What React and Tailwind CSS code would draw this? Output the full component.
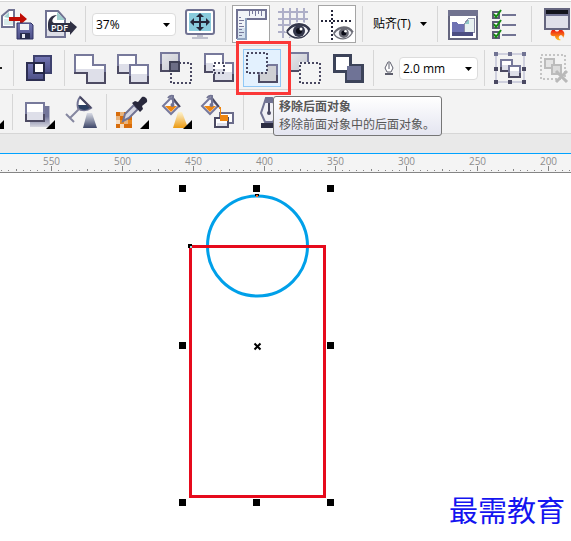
// src/App.jsx
import React, { useState } from "react";

const LIGHT = "#717393";
const DARK = "#4a4962";

// null is a cell whose number lies outside of the window
const RULER_MARKS = [null, 550, 500, 450, 400, 350, 300, 250, 200, null];
const MINOR_TICKS = [0, 7, 14, 21, 28, 42, 49, 56, 63];

// Shared gradients, every icon refers to these by id
function IconDefs() {
  return (
    <svg width="0" height="0" className="absolute" aria-hidden="true">
      <defs>
        <linearGradient id="edge" x1="0" y1="0" x2="0" y2="1">
          <stop offset="0.6" stopColor="#77799b" />
          <stop offset="0.6" stopColor="#4d4b63" />
        </linearGradient>
        <linearGradient id="face" x1="0" y1="0" x2="0" y2="1">
          <stop offset="0.5" stopColor="#ffffff" />
          <stop offset="0.5" stopColor="#dedfe9" />
        </linearGradient>
        <linearGradient id="grayFace" x1="0" y1="0" x2="1" y2="1">
          <stop offset="0" stopColor="#e6e7ea" />
          <stop offset="1" stopColor="#c6c8d0" />
        </linearGradient>
        <linearGradient id="navy" x1="0" y1="0" x2="0" y2="1">
          <stop offset="0" stopColor="#7477b5" />
          <stop offset="1" stopColor="#4c4f86" />
        </linearGradient>
        <linearGradient id="mist" x1="0" y1="0" x2="0" y2="1">
          <stop offset="0" stopColor="#d9dce6" />
          <stop offset="1" stopColor="#3d4668" />
        </linearGradient>
        <linearGradient id="gold" x1="0" y1="0" x2="0" y2="1">
          <stop offset="0" stopColor="#fdf3cf" />
          <stop offset="1" stopColor="#eb9a12" />
        </linearGradient>
        <linearGradient id="shade" x1="0" y1="0" x2="0" y2="1">
          <stop offset="0.5" stopColor="#73769a" />
          <stop offset="1" stopColor="#d5d6df" />
        </linearGradient>
        <linearGradient id="fire" x1="0" y1="0" x2="0" y2="1">
          <stop offset="0" stopColor="#ee1c10" />
          <stop offset="1" stopColor="#ffc41a" />
        </linearGradient>
      </defs>
    </svg>
  );
}

function Icon({ children, crisp }) {
  return (
    <svg
      viewBox="0 0 38 38"
      width="38"
      height="38"
      fill="none"
      shapeRendering={crisp ? "crispEdges" : "auto"}
      aria-hidden="true"
    >
      {children}
    </svg>
  );
}

// Little corner mark for buttons that open a flyout
const Flyout = () => <path d="M36 27v9h-9z" fill="#000" />;

const Dotted = ({ x, y, w, h, color = "#4a4962" }) => (
  <rect x={x} y={y} width={w} height={h} stroke={color} strokeWidth="2" strokeDasharray="2 2" />
);

const Bucket = () => (
  <>
    <path d="M11 5l8 8-8 8-8-8z" fill="#f6f6fa" stroke="#77799b" strokeWidth="2" />
    <path d="M5 13h12l-6 6z" fill="#ee8610" />
    <path d="M13 5l7 9" stroke={DARK} strokeWidth="2" />
    <path d="M8 5q2-3 5-2v9" stroke={LIGHT} strokeWidth="2" />
    <circle cx="12.500" cy="12" r="2" fill={LIGHT} />
  </>
);

const ImportIcon = () => (
  <Icon>
    <path d="M4 22V11l7-6h5v17z" fill="#fff" stroke={LIGHT} strokeWidth="2" />
    <path d="M6 12l5-5v6z" fill="#a6d3d2" />
    <path d="M6 14h9v6H6z" fill="#d8ebea" />
    <path d="M11 12h11V8l7 6-7 6v-4H11z" fill="#c00d05" />
    <path d="M19 18h14l2 2v14H19z" fill="url(#navy)" stroke="#2e3163" strokeWidth="1" />
    <path d="M22 19h9v6h-9z" fill="#eef0f5" />
    <path d="M22 28h10v6H22z" fill="#25294b" />
    <path d="M24 29h3v4h-3z" fill="#e5e7f0" />
  </Icon>
);

const PdfIcon = () => (
  <Icon>
    <path d="M5 6h12l7 8v18H5z" fill="#fff" stroke={LIGHT} strokeWidth="2" />
    <path d="M6 24h17v7H6z" fill="#dcdde6" />
    <path d="M16 7v8h8z" fill="#9fcfce" />
    <path d="M16 10c-6 0-9 4-9 9 0 5 0 7 3 8h19v3l7-8-7-6v2H13c-3-1-2-5 3-8z" fill="#2f3044" />
    <text x="10" y="26" fill="#fff" fontSize="9" fontWeight="600" fontFamily="Open Sans, sans-serif">PDF</text>
  </Icon>
);

const FullScreenIcon = () => (
  <Icon>
    <rect x="5" y="5" width="28" height="24" rx="2" fill="#fff" stroke={LIGHT} strokeWidth="2" />
    <path d="M8 8h22v18H8z" fill="#89cbdc" />
    <path d="M16 30h6v2h5v2H11v-2h5z" fill="#bfc1cd" />
    <path d="M19 10v14M11 17h16" stroke="#252638" strokeWidth="2" />
    <path d="M19 8l4 4h-8zM19 26l4-4h-8zM9 17l4-4v8zM29 17l-4-4v8z" fill="#252638" />
  </Icon>
);

const RulersIcon = () => (
  <Icon crisp>
    <path d="M5 5h28v8H14v20H5z" fill="#f1f4f8" />
    <path d="M5 23h9v10H5z" fill="#d4e1ee" />
    <path d="M5 34V5h29v9H14" stroke={LIGHT} strokeWidth="2" />
    <path d="M14 13v21H5" stroke="#8fa3c0" strokeWidth="2" />
    <path d="M17 6v5M20 6v3M23 6v5M26 6v3M29 6v5M7 12h2M7 15h5M7 18h3M7 21h5M7 24h3M7 27h5M7 30h3" stroke="#77799b" />
  </Icon>
);

const Eye = ({ cx, cy, rx, color = "#35384c" }) => (
  <g transform={`translate(${cx} ${cy}) scale(${rx / 12})`}>
    <path d="M-13 0Q-7-9 2-9T13-1Q8 9 0 9T-13 0z" fill="#fff" />
    <path d="M-11 1Q-7-6 1-6T11 0Q7 7 0 7T-11 1z" fill="#f4f4f8" stroke={color} strokeWidth="1.500" />
    <path d="M-11 0Q-6-7 1-7T12-1" stroke={color} strokeWidth="2" />
    <circle cx="1" cy="0" r="6" fill={color} />
    <circle cx="1" cy="0" r="3" fill="#0c0d18" />
    <circle cx="3" cy="-2" r="1.500" fill="#fff" />
  </g>
);

const GridIcon = () => (
  <Icon>
    <path d="M8 3v30M15 3v30M22 3v30M29 3v30M3 7h30M3 14h30M3 20h30M3 27h30" stroke="#aeafc8" strokeWidth="2" shapeRendering="crispEdges" />
    <Eye cx={23} cy={26} rx={12} />
  </Icon>
);

const GuidesIcon = () => (
  <Icon>
    <path d="M3 16h32M14 5v31" stroke="#25263a" strokeWidth="2" strokeDasharray="2 2" shapeRendering="crispEdges" />
    <path d="M12 16l2-2 2 2-2 2z" fill="#fff" stroke="#25263a" />
    <Eye cx={25} cy={28} rx={10} color="#6b6c76" />
  </Icon>
);

const WelcomeIcon = () => (
  <Icon crisp>
    <path d="M5 6h28v28H5z" fill="#fff" stroke="#65667f" strokeWidth="2" />
    <path d="M4 5h30v6H4z" fill="#717390" />
    <path d="M8 17h5l1 2h6v12H8z" fill="#6f72b3" />
    <path d="M20 19l5-6h5v14H20z" fill="#e8f1f1" stroke="#8c8ea8" />
    <path d="M21 19l4-5v5z" fill="#8fc9c7" />
    <path d="M8 27h21v4H8z" fill="#4c4e82" />
  </Icon>
);

const OptionsIcon = () => (
  <Icon>
    {[6, 16, 26].map((y) => (
      <g key={y} transform={`translate(5 ${y})`}>
        <path d="M1 1h6v6H1z" fill="#fff" stroke="#5b5c75" strokeWidth="2" />
        <path d="M2 3l2 3 5-7" stroke="#168a12" strokeWidth="2" />
        <path d="M10 3h14v2H10z" fill="#717393" />
      </g>
    ))}
  </Icon>
);

const LaunchIcon = () => (
  <Icon>
    <path d="M7 4h24v20H7z" fill="#dfe0e9" stroke="#65667f" strokeWidth="2" />
    <path d="M8 5h22v4H8z" fill="#12141c" />
    <path d="M8 9h22v2H8z" fill="#717393" />
    <path d="M14 25c-3 4-1 7 3 6 0 3 3 5 6 4-3-1-3-4 0-5 2 1 2 2 2 3 2-3 2-6-1-8h-3c0 2-4 2-4 0z" fill="url(#fire)" />
  </Icon>
);

const CombineIcon = () => (
  <Icon crisp>
    <rect x="14" y="7" width="17" height="17" fill="url(#navy)" stroke="#3e416e" strokeWidth="2" />
    <rect x="7" y="14" width="17" height="17" fill="url(#navy)" stroke="#2d2f52" strokeWidth="2" />
    <rect x="14" y="14" width="10" height="10" fill="#fff" stroke="#242746" strokeWidth="2" />
  </Icon>
);

const WeldIcon = () => (
  <Icon crisp>
    <path d="M4 6h18v10h12v18H16V24H4z" fill="url(#face)" stroke="url(#edge)" strokeWidth="2" />
  </Icon>
);

const TrimIcon = () => (
  <Icon crisp>
    <rect x="4" y="6" width="18" height="18" fill="url(#face)" stroke="url(#edge)" strokeWidth="2" />
    <rect x="16" y="16" width="18" height="18" fill="url(#face)" stroke="url(#edge)" strokeWidth="2" />
  </Icon>
);

const IntersectIcon = () => (
  <Icon crisp>
    <Dotted x={14} y={14} w={20} h={20} />
    <rect x="4" y="4" width="18" height="18" fill="url(#grayFace)" stroke="url(#edge)" strokeWidth="2" />
    <rect x="13" y="13" width="9" height="9" fill="#6c6e86" stroke="#3f4156" strokeWidth="2" />
  </Icon>
);

const SimplifyIcon = () => (
  <Icon crisp>
    <rect x="5" y="5" width="18" height="18" fill="url(#face)" stroke="url(#edge)" strokeWidth="2" />
    <rect x="14" y="14" width="19" height="18" fill="url(#face)" stroke="url(#edge)" strokeWidth="2" />
    <path d="M13 13h12v7H13z" fill="#fff" />
    <path d="M13 20h12v5H13z" fill="#dedfe9" />
    <Dotted x={14} y={14} w={10} h={10} />
  </Icon>
);

const FrontMinusBackIcon = () => (
  <Icon crisp>
    <rect x="16" y="16" width="18" height="17" fill="#cfd0d4" stroke="url(#edge)" strokeWidth="2" />
    <path d="M3 3h21v20H3z" fill="#e3f1fe" />
    <Dotted x={4} y={4} w={20} h={20} />
  </Icon>
);

const BackMinusFrontIcon = () => (
  <Icon crisp>
    <rect x="4" y="4" width="18" height="18" fill="url(#grayFace)" stroke="url(#edge)" strokeWidth="2" />
    <path d="M13 13h22v22H13z" fill="#f4f4f4" />
    <Dotted x={14} y={14} w={20} h={20} />
  </Icon>
);

const BoundaryIcon = () => (
  <Icon crisp>
    <path d="M5 6h16v10h12v16H17V22H5z" fill="#fff" stroke="#3c4359" strokeWidth="3" />
    <path d="M18 17h14v14H18z" fill="#6f7396" />
  </Icon>
);

const GroupIcon = () => (
  <Icon crisp>
    <path d="M5 5h28v28H5z" stroke="#cfd0de" strokeWidth="2" />
    <rect x="10" y="11" width="11" height="11" fill="url(#face)" stroke="url(#edge)" strokeWidth="2" />
    <rect x="18" y="17" width="11" height="11" fill="url(#face)" stroke="url(#edge)" strokeWidth="2" />
    <path d="M3 3h4v4H3zM17 3h4v4h-4zM31 3h4v4h-4z" fill={LIGHT} />
    <path d="M3 18h4v4H3zM31 18h4v4h-4zM3 31h4v4H3zM17 31h4v4h-4zM31 31h4v4h-4z" fill={DARK} />
  </Icon>
);

const UngroupIcon = () => (
  <Icon>
    <g shapeRendering="crispEdges">
      <Dotted x={7} y={6} w={24} h={24} color="#c4c4c4" />
      <rect x="11" y="10" width="9" height="9" fill="#e4e4e4" stroke="#bcbcbc" strokeWidth="2" />
      <rect x="18" y="16" width="9" height="9" fill="#dcdcdc" stroke="#bcbcbc" strokeWidth="2" />
    </g>
    <path d="M22 22l11 11M33 22L22 33" stroke="#b9b9b9" strokeWidth="3" />
  </Icon>
);

const PrevToolIcon = () => (
  <Icon crisp>
    <path d="M27 18h6v2h-6z" fill="#222" />
  </Icon>
);

const FlyoutOnlyIcon = () => (
  <Icon>
    <Flyout />
  </Icon>
);

const ShadowIcon = () => (
  <Icon>
    <path d="M11 13h19v21H11z" fill="url(#shade)" />
    <path d="M30 13h1v21h-1z" fill="#b9bbcb" />
    <rect x="7" y="10" width="18" height="18" fill="url(#face)" stroke="url(#edge)" strokeWidth="2" />
    <Flyout />
  </Icon>
);

const TransparencyIcon = () => (
  <Icon>
    <path d="M18 4l11 11c-4 3-10 3-13 0-1-4-1-7 2-11z" fill="#fff" stroke={LIGHT} strokeWidth="2" />
    <path d="M16 12h10l2 3c-4 3-9 2-11 0z" fill="#2b4063" />
    <path d="M18 4l11 11" stroke={DARK} strokeWidth="2" />
    <path d="M17 16l-9 9M4 21l8 8" stroke="#8587a0" strokeWidth="2" />
    <path d="M25 20h5l5 15H21z" fill="url(#mist)" />
  </Icon>
);

const EyedropperIcon = () => (
  <Icon>
    <g shapeRendering="crispEdges">
      <path d="M3 19h16v16H3z" fill="#e7b27c" />
      <path d="M3 19h4v4H3zM11 19h4v4h-4zM7 23h4v4H7zM15 23h4v4h-4zM11 31h8v4h-8zM3 31h4v4H3z" fill="#d86c0a" />
      <path d="M7 27h4v4H7zM15 27h4v4h-4z" fill="#e8871e" />
      <path d="M3 27h4v4H3zM7 31h4v4H7z" fill="#f6dcc0" />
    </g>
    <path d="M10 28l2-7 9-9 4 4-9 9z" fill="#d5d6e2" stroke={LIGHT} strokeWidth="2" />
    <path d="M19 10l3-2 3 1 4-5c3-1 6 2 5 5l-5 4 1 3-3 3z" fill="#28283c" />
    <Flyout />
  </Icon>
);

const FillIcon = () => (
  <Icon>
    <g transform="translate(4 0)">
      <Bucket />
    </g>
    <path d="M22 19h4l6 16H17z" fill="url(#gold)" />
    <Flyout />
  </Icon>
);

const SmartFillIcon = () => (
  <Icon>
    <g shapeRendering="crispEdges">
      <rect x="21" y="20" width="13" height="10" fill="#fff" stroke="#6b6c8b" strokeWidth="2" />
      <rect x="16" y="25" width="13" height="9" fill="#fff" stroke={DARK} strokeWidth="2" />
      <path d="M18 30h10v3H18z" fill="#dedfe9" />
      <path d="M20 14h2v8h7v6h-8v-12h-1z" fill="#ee8610" />
    </g>
    <Bucket />
  </Icon>
);

const OutlinePenIcon = () => (
  <Icon>
    <path d="M16 5h6l5 15-4 9h-8l-4-9z" fill="#f0f0f5" stroke={LIGHT} strokeWidth="2" />
    <path d="M16 4h6l1 6h-8z" fill={LIGHT} />
    <path d="M19 10v9" stroke={DARK} strokeWidth="2" />
    <circle cx="19" cy="20" r="2" fill={DARK} />
    <path d="M11 30h17v5H11z" fill="#2b2c42" />
  </Icon>
);

const NibIcon = () => (
  <svg viewBox="0 0 10 14" width="10" height="14" fill="none" aria-hidden="true">
    <path d="M4 1h2l3 6-2 4H3L1 7z" fill="#fff" stroke="#5d5e6c" />
    <path d="M5 2v6" stroke="#5d5e6c" />
    <path d="M1 12h8v2H1z" fill="#5d5e6c" />
  </svg>
);

const Caret = () => (
  <svg viewBox="0 0 7 4" width="7" height="4" className="pointer-events-none shrink-0" aria-hidden="true">
    <path d="M0 0h7L3.500 4z" fill="#000" />
  </svg>
);

function ToolButton({ label, icon: IconComponent, pressed }) {
  return (
    <button
      type="button"
      aria-label={label}
      className={
        pressed
          ? "size-[38px] shrink-0 bg-white inset-ring inset-ring-[#a5a5a5]"
          : "size-[38px] shrink-0"
      }
    >
      <IconComponent />
    </button>
  );
}

function Separator() {
  return <div className="mx-px mt-px h-9 w-px shrink-0 bg-[#d6d6d6]" />;
}

function Toolbar({ label, className, children }) {
  return (
    <div
      role="toolbar"
      aria-label={label}
      className={`flex h-11 items-start gap-[5px] border-b border-[#d6d6d6] pt-[3px] ${className}`}
    >
      {children}
    </div>
  );
}

function DropDown({ label, value, options, onChange, className }) {
  return (
    <div className={`mt-2 flex h-[23px] shrink-0 items-center rounded-sm border border-[#dcdcdc] bg-white pr-1 ${className}`}>
      <select
        aria-label={label}
        value={value}
        onChange={(e) => onChange(e.target.value)}
        className="-mr-2 h-full w-full min-w-0 appearance-none bg-transparent pl-[3px] text-xs text-black outline-none"
      >
        {options.map((o) => (
          <option key={o} value={o}>{o}</option>
        ))}
      </select>
      <Caret />
    </div>
  );
}

function Ruler() {
  return (
    <div className="flex h-[19px] overflow-hidden border-b border-[#858585] bg-[#f4f4f4]">
      <div className="-ml-[55px] flex">
        {RULER_MARKS.map((mark, i) => (
          <div key={i} className="w-[71px] shrink-0">
            <div className="h-3 text-center text-[10px] leading-[15px] text-[#8e8e8e]">{mark}</div>
            <svg viewBox="0 0 71 6" width="71" height="6" className="block" shapeRendering="crispEdges" aria-hidden="true">
              <path d="M35 0h1v5h-1zM0 3h1v2H0z" fill="#858585" />
              {MINOR_TICKS.map((x) => (
                <rect key={x} x={x} y="4" width="1" height="1" fill="#858585" />
              ))}
            </svg>
          </div>
        ))}
      </div>
    </div>
  );
}

// The selected circle and rectangle, with their handles
function Drawing() {
  return (
    <svg viewBox="0 0 155 321" width="155" height="321" className="mt-3 ml-[179px] shrink-0" fill="none" aria-label="drawing">
      <circle cx="78.500" cy="61" r="50" stroke="#00a0e9" strokeWidth="3" />
      <g shapeRendering="crispEdges">
        <rect x="11.500" y="61.500" width="134" height="250" stroke="#e60a1c" strokeWidth="3" />
        {[0, 74, 148].map((x) =>
          [0, 157, 314].map((y) =>
            x === 74 && y === 157 ? null : (
              <rect key={`${x}-${y}`} x={x} y={y} width="7" height="7" fill="#000" />
            )
          )
        )}
        <path d="M9 59h4v4H9zM76 9h4v2h-4z" fill="#000" />
        <path d="M11 61h2v2h-2z" fill="#8fd8dc" />
        <path d="M77 10h2v2h-2z" fill="#f0642a" />
      </g>
      <path d="M75.500 158.500l6 6M81.500 158.500l-6 6" stroke="#000" strokeWidth="2" />
    </svg>
  );
}

function App() {
  const [zoom, setZoom] = useState("37%");
  const [outline, setOutline] = useState("2.0 mm");

  return (
    <div className="flex min-h-screen flex-col overflow-hidden bg-white font-['Open_Sans','Noto_Sans_CJK_SC',sans-serif]">
      <IconDefs />

      <header className="mt-px border-t border-[#d6d6d6] bg-[#f3f3f3]">
        <Toolbar label="Standard" className="-ml-0.5">
          <ToolButton label="导入" icon={ImportIcon} />
          <ToolButton label="发布为 PDF" icon={PdfIcon} />
          <Separator />
          <DropDown label="缩放级别" value={zoom} options={["37%", "50%", "100%"]} onChange={setZoom} className="w-[84px]" />
          <ToolButton label="全屏预览" icon={FullScreenIcon} />
          <Separator />
          <ToolButton label="显示标尺" icon={RulersIcon} pressed />
          <ToolButton label="显示网格" icon={GridIcon} />
          <ToolButton label="显示辅助线" icon={GuidesIcon} pressed />
          <Separator />
          <button type="button" className="flex h-[38px] w-[62px] shrink-0 items-center justify-between px-1 text-xs text-black">
            贴齐(T)
            <Caret />
          </button>
          <Separator />
          <ToolButton label="欢迎屏幕" icon={WelcomeIcon} />
          <ToolButton label="选项" icon={OptionsIcon} />
          <Separator />
          <ToolButton label="应用程序启动器" icon={LaunchIcon} />
        </Toolbar>

        <Toolbar label="Property bar" className="-ml-[31px]">
          <ToolButton label="对齐" icon={PrevToolIcon} />
          <Separator />
          <ToolButton label="合并" icon={CombineIcon} />
          <Separator />
          <ToolButton label="焊接" icon={WeldIcon} />
          <ToolButton label="修剪" icon={TrimIcon} />
          <ToolButton label="相交" icon={IntersectIcon} />
          <ToolButton label="简化" icon={SimplifyIcon} />
          <div className="relative shrink-0">
            <button
              type="button"
              aria-label="移除后面对象"
              aria-describedby="tip"
              className="block size-[38px] bg-[#e3f1fe] inset-ring inset-ring-[#90c8f6]"
            >
              <FrontMinusBackIcon />
            </button>
            <div className="pointer-events-none absolute -top-2 -right-2.5 -bottom-2 -left-[7px] z-10 border-[3px] border-[#fb3838]" />
            <div
              id="tip"
              role="tooltip"
              className="absolute top-[47px] left-[30px] z-20 h-10 w-[169px] rounded-[3px] border border-[#767676] bg-linear-to-b from-white to-[#e4e5f0] px-[5px] py-px text-xs whitespace-nowrap text-[#575757]"
            >
              <p className="leading-[18px] font-bold">移除后面对象</p>
              <p className="leading-[18px]">移除前面对象中的后面对象。</p>
            </div>
          </div>
          <ToolButton label="移除前面对象" icon={BackMinusFrontIcon} />
          <ToolButton label="边界" icon={BoundaryIcon} />
          <Separator />
          <div className="flex shrink-0 gap-[5px] pl-1">
            <span className="flex h-[38px] items-center">
              <NibIcon />
            </span>
            <DropDown label="轮廓宽度" value={outline} options={["2.0 mm", "1.0 mm", "0.5 mm"]} onChange={setOutline} className="w-[79px]" />
          </div>
          <Separator />
          <ToolButton label="组合对象" icon={GroupIcon} />
          <ToolButton label="取消组合对象" icon={UngroupIcon} />
        </Toolbar>

        <Toolbar label="Toolbox" className="-ml-8">
          <ToolButton label="尺度" icon={FlyoutOnlyIcon} />
          <Separator />
          <ToolButton label="阴影" icon={ShadowIcon} />
          <ToolButton label="透明度" icon={TransparencyIcon} />
          <Separator />
          <ToolButton label="颜色滴管" icon={EyedropperIcon} />
          <ToolButton label="交互式填充" icon={FillIcon} />
          <ToolButton label="智能填充" icon={SmartFillIcon} />
          <Separator />
          <ToolButton label="轮廓笔" icon={OutlinePenIcon} />
        </Toolbar>
      </header>

      <div className="h-[19px] bg-[#e9e9e9]" />
      <div className="h-px bg-[#00a2ff]" />
      <Ruler />

      <main className="flex flex-1 items-start justify-between">
        <Drawing />
        <p className="mr-1.5 mb-3 shrink-0 self-end font-['KaiTi','AR_PL_UKai_CN','Noto_Sans_CJK_SC',serif] text-[29px] leading-10 font-normal text-[#1414f0]">
          最需教育
        </p>
      </main>
    </div>
  );
}

export default App;
